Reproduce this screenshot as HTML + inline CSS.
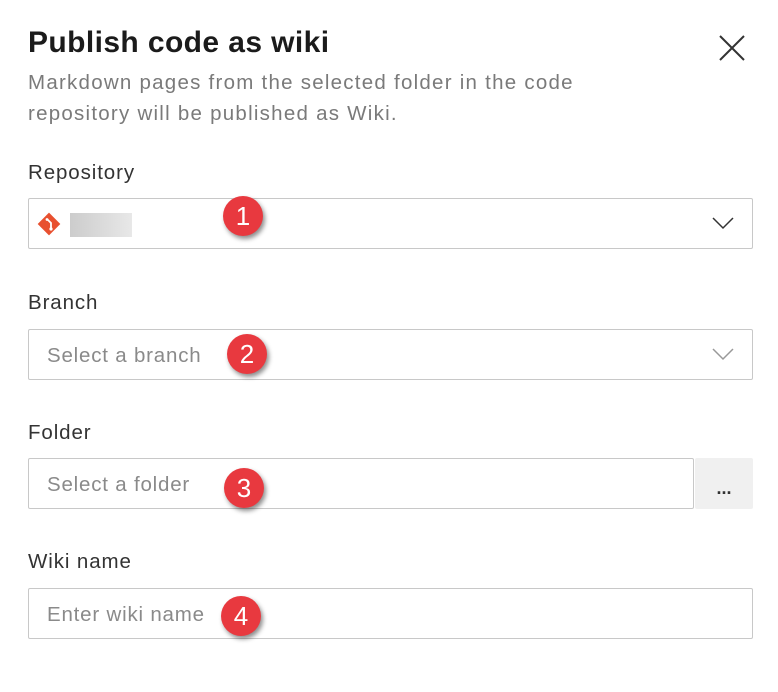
<!DOCTYPE html>
<html><head><style>
body{margin:0;width:778px;height:692px;background:#fff;font-family:"Liberation Sans",sans-serif;position:relative;overflow:hidden}
.a{position:absolute}
.t{left:28px;top:26px;font-size:30px;font-weight:600;color:#1b1b1b;letter-spacing:0.4px}
.d{left:28px;top:67px;font-size:20.5px;color:#7a7a7a;line-height:31px;letter-spacing:1.25px}
.l{left:28px;font-size:20.5px;color:#333;letter-spacing:0.9px}
.f{left:28px;width:723px;height:49px;border:1px solid #c8c8c8;border-radius:2px;box-sizing:border-box}
.ph{position:absolute;left:18px;top:14px;font-size:20.5px;color:#8a8a8a;letter-spacing:0.8px}
.b{width:40px;height:40px;border-radius:50%;background:#e8393f;color:#fff;font-size:26px;text-align:center;line-height:40px;box-shadow:2px 3px 5px rgba(0,0,0,.45)}
.ch{position:absolute;right:18px;top:17px}
</style></head><body>
<div class="a t">Publish code as wiki</div>
<svg class="a" style="left:719px;top:35px" width="26" height="26"><path d="M1 1L25 25M25 1L1 25" stroke="#333" stroke-width="2"/></svg>
<div class="a d">Markdown pages from the selected folder in the code<br>repository will be published as Wiki.</div>
<div class="a l" style="top:161px">Repository</div>
<div class="a f" style="top:198px;width:725px;height:51px">
<svg style="position:absolute;left:8px;top:13px" width="24" height="24" viewBox="0 0 24 24"><rect x="4" y="4" width="16" height="16" transform="rotate(45 12 12)" fill="#e8502f"/><path d="M10 7l4 4v6" stroke="#fff" stroke-width="1.8" fill="none"/><circle cx="14" cy="17" r="1.6" fill="#fff"/><circle cx="10" cy="7.5" r="1.4" fill="#fff"/></svg>
<div style="position:absolute;left:41px;top:14px;width:62px;height:24px;background:linear-gradient(90deg,#ccc,#e8e8e8)"></div>
<svg class="ch" width="22" height="14"><path d="M1 2L11 12L21 2" stroke="#333" stroke-width="1.5" fill="none"/></svg></div>
<div class="a b" style="left:223px;top:196px">1</div>
<div class="a l" style="top:291px">Branch</div>
<div class="a f" style="top:329px;width:725px;height:51px"><div class="ph">Select a branch</div>
<svg class="ch" width="22" height="14"><path d="M1 2L11 12L21 2" stroke="#999" stroke-width="1.5" fill="none"/></svg></div>
<div class="a b" style="left:227px;top:334px">2</div>
<div class="a l" style="top:421px">Folder</div>
<div class="a f" style="top:458px;width:666px;height:51px"><div class="ph">Select a folder</div></div>
<div class="a" style="left:695px;top:458px;width:58px;height:51px;background:#f0f0f0;border-radius:2px;text-align:center;line-height:60px;font-size:18px;font-weight:bold;color:#333">...</div>
<div class="a b" style="left:224px;top:468px">3</div>
<div class="a l" style="top:550px">Wiki name</div>
<div class="a f" style="top:588px;width:725px;height:51px"><div class="ph">Enter wiki name</div></div>
<div class="a b" style="left:221px;top:596px">4</div>
</body></html>
